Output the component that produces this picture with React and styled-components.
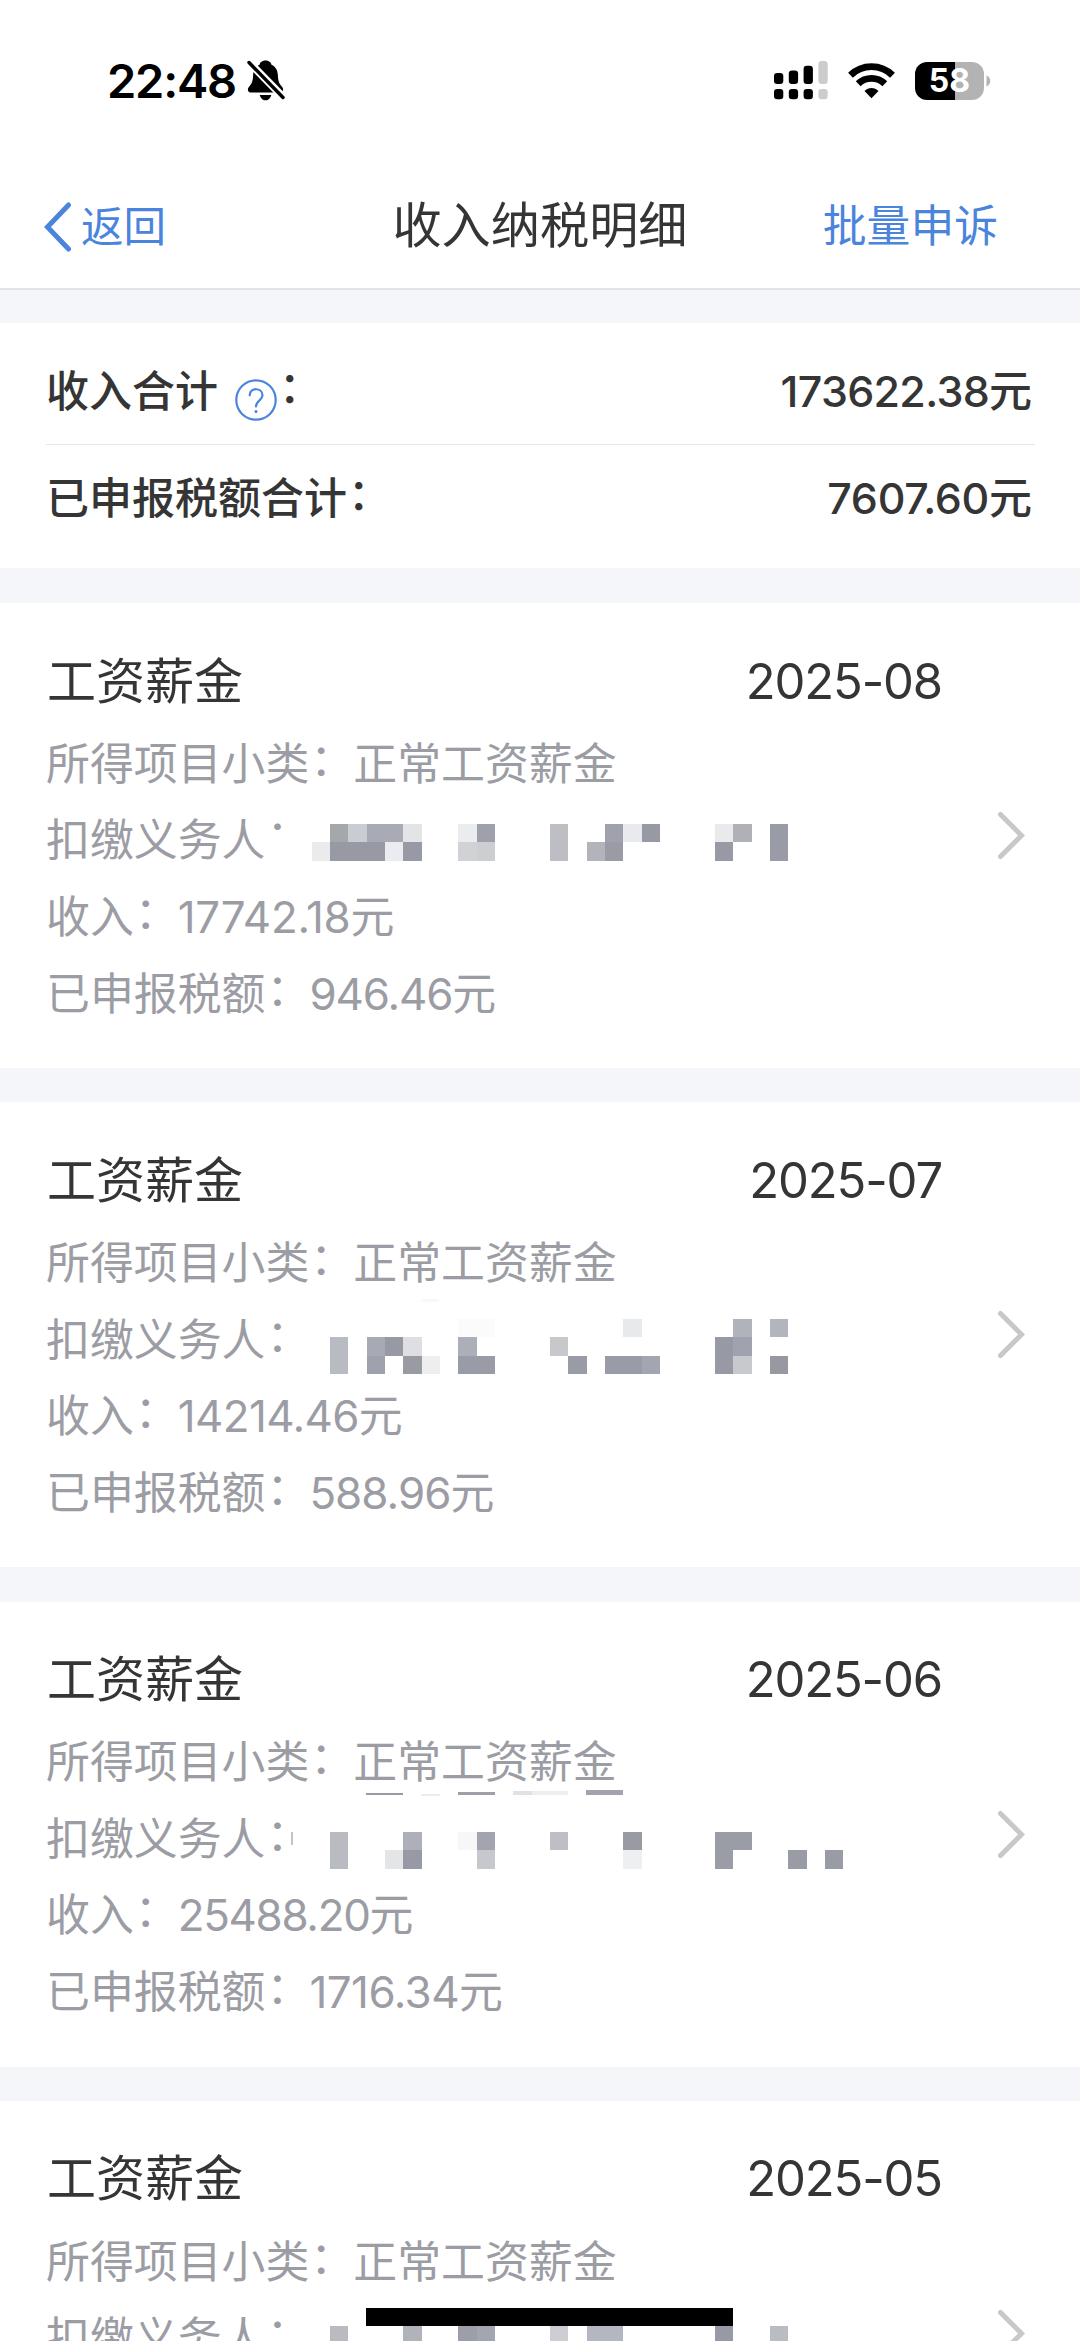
import React from 'react';
import styled, { createGlobalStyle } from 'styled-components';

const GlobalStyle = createGlobalStyle`
  html, body { margin: 0; padding: 0; background: #f4f6fa; }
  body {
    height: 2341px;
    overflow: hidden;
    font-family: Inter, "Noto Sans CJK SC", sans-serif;
    color: #353535;
  }
  * { box-sizing: border-box; }
`;

const Screen = styled.main`
  position: relative;
  width: 1080px;
  height: 2341px;
  overflow: hidden;
  background: #f4f6fa;
  display: flex;
  flex-direction: column;
`;

const StatusBar = styled.div`
  flex: none;
  height: 165px;
  padding: 50px 89px 0 107px;
  display: flex;
  align-items: flex-start;
  justify-content: space-between;
  background: #fff;
`;

const StatusGroup = styled.div`
  display: flex;
  align-items: center;
  height: 61px;
  gap: ${(p) => p.$gap}px;
`;

const Clock = styled.span`
  width: 130px;
  font-size: 47px;
  font-weight: 600;
  line-height: 61px;
  letter-spacing: -1.2px;
  color: #000;
  white-space: nowrap;
`;

const Battery = styled.div`
  display: flex;
  align-items: center;
  gap: 2px;
`;

const BatteryBody = styled.div`
  width: 69px;
  height: 38px;
  border-radius: 12px;
  background: linear-gradient(90deg, #000 58%, #b3b3b3 58%);
  color: #fff;
  font-size: 32px;
  font-weight: 700;
  line-height: 38px;
  text-align: center;
`;

const NavBar = styled.header`
  flex: none;
  height: 125px;
  padding: 0 82px 0 44px;
  display: grid;
  grid-template-columns: 1fr auto 1fr;
  align-items: center;
  background: #fff;
  border-bottom: 2px solid #e1e3e8;
`;

const NavTitle = styled.h1`
  margin: 0 0 4px 38px;
  font-size: 49.2px;
  font-weight: 400;
  line-height: 60px;
`;

const NavLink = styled.a`
  display: flex;
  align-items: center;
  justify-self: ${(p) => p.$side};
  gap: 9px;
  font-size: ${(p) => p.$size}px;
  line-height: 60px;
  color: #4a84dc;
`;

const Summary = styled.section`
  flex: none;
  height: 245px;
  margin-top: 33px;
  padding: 15px 45px 0 46px;
  background: #fff;
`;

const SummaryRow = styled.div`
  height: 106.5px;
  display: flex;
  align-items: center;
  justify-content: space-between;
  font-size: 43px;
  font-weight: 500;
  line-height: 60px;
  border-bottom: ${(p) => (p.$divided ? '1.5px solid #e6e7ea' : 'none')};
`;

const SummaryLabel = styled.div`
  display: flex;
  align-items: center;
  padding-top: 1px;
`;

const SummaryValue = styled.div`
  padding-right: 3px;
`;

const Amount = styled.span`
  letter-spacing: ${(p) => p.$track || 0}px;
`;

const HelpMark = styled.svg`
  margin: 17px 1px 0 17px;
`;

const Card = styled.article`
  flex: none;
  position: relative;
  height: 465px;
  margin-top: ${(p) => (p.$first ? 35 : 34.25)}px;
  padding: 32px 56px 0 46px;
  display: grid;
  grid-template-columns: 1fr 26px;
  align-items: start;
  background: #fff;
`;

const CardHead = styled.div`
  height: 90px;
  padding: 3px 56px 0 1px;
  display: flex;
  align-items: center;
  justify-content: space-between;
  font-size: 49px;
  line-height: 60px;
`;

const Period = styled.time`
  letter-spacing: -1.15px;
`;

const Line = styled.div`
  height: 76.6px;
  padding-top: 1px;
  display: flex;
  align-items: center;
  font-size: 43.9px;
  line-height: 60px;
  color: #9c9da4;
  white-space: nowrap;
`;

const Colon = styled.span`
  display: inline-block;
  transform: translate(1px, -4px);
  clip-path: ${(p) => (p.$cut ? 'inset(0 0 32px 0)' : 'none')};
`;

const Chevron = styled.svg`
  align-self: center;
  margin-top: -32px;
`;

const Redaction = styled.svg`
  position: absolute;
  left: 290px;
  top: 180px;
`;

const HomeIndicator = styled.div`
  position: absolute;
  left: 366px;
  top: 2308px;
  width: 367px;
  height: 18px;
  background: #000;
`;

const CELL = 18.33;

/* Redacted names: [column, row, colour] on a mosaic of square cells. */
const RECORDS = [
  {
    period: '2025-08', income: '17742.18', incomeTrack: -0.25, tax: '946.46', taxTrack: -1.1, cut: true, top: 221,
    cells: [
      [18, 0, '#a5a8aa'], [19, 0, '#c8ccd3'], [20, 0, '#a8abb5'], [21, 0, '#a8abb5'], [22, 0, '#e3e4e6'],
      [17, 1, '#ebebed'], [18, 1, '#9799a4'], [19, 1, '#9799a4'], [20, 1, '#9799a4'], [21, 1, '#ebecf0'], [22, 1, '#9799a4'],
      [25, 0, '#eaeced'], [26, 0, '#9ea1ac'], [25, 1, '#d1d2d5'], [26, 1, '#cdced1'],
      [30, 0, '#bdbfc3'], [30, 1, '#bcbdc5'], [32, 1, '#b2b3bb'], [33, 0, '#9fa2ad'], [33, 1, '#9b9ba6'],
      [34, 0, '#e8eaed'], [35, 0, '#9799a3'],
      [39, 0, '#e9eaeb'], [39, 1, '#9799a4'], [40, 0, '#afb1b7'], [42, 0, '#999ba6'], [42, 1, '#999ba6'],
    ],
  },
  {
    period: '2025-07', income: '14214.46', incomeTrack: -0.6, tax: '588.96', taxTrack: -0.95, top: 217,
    cells: [
      [18, 1, '#b9bbc2'], [18, 2, '#b9bbc2'], [20, 1, '#a7aab4'], [20, 2, '#9fa1ac'], [21, 1, '#9799a4'],
      [22, 1, '#dddfe3'], [22, 2, '#999ba2'], [23, 2, '#eeeeef'],
      [25, 0, '#fbfbfc'], [26, 0, '#fbfbfc'], [25, 1, '#acafb7'], [25, 2, '#999ba6'], [26, 2, '#999ba6'],
      [30, 1, '#c6c8cb'], [31, 2, '#999ba6'], [33, 2, '#999ba6'], [34, 2, '#999ba6'], [35, 2, '#a3a5b0'], [34, 0, '#e8e9ea'],
      [39, 1, '#979aa5'], [39, 2, '#979aa5'], [40, 0, '#b0b3b9'], [40, 1, '#a0a3af'], [40, 2, '#c7c9cf'],
      [42, 0, '#b3b5be'], [42, 2, '#9798a2'],
    ],
    strips: [[421, 197, 18, 3, '#f8f8f8']],
  },
  {
    period: '2025-06', income: '25488.20', incomeTrack: -1.3, tax: '1716.34', taxTrack: -0.5, top: 230,
    cells: [
      [18, 0, '#b9bbc0'], [18, 1, '#b9bbc2'], [21, 1, '#e4e5e6'], [22, 0, '#adb0b9'], [22, 1, '#9799a4'],
      [25, 0, '#f7f7f8'], [26, 0, '#a2a4af'], [26, 1, '#c6c8cd'], [30, 0, '#bebfc4'],
      [34, 0, '#999ba2'], [34, 1, '#eeeff1'],
      [39, 0, '#9a9ca6'], [39, 1, '#9a9ca6'], [40, 0, '#9a9ca6'], [43, 1, '#999ba5'], [45, 1, '#999ba5'],
    ],
    strips: [
      [366, 191, 37, 2, '#999ba2'], [421, 192, 19, 2, '#ececee'], [458, 190, 37, 3, '#9fa0a7'],
      [513, 189, 19, 4, '#e2e2e4'], [532, 189, 36, 4, '#eeeeef'], [586, 188, 37, 5, '#a2a3af'],
      [291, 230, 2, 13, '#c3c4c8'],
    ],
  },
  {
    period: '2025-05', income: '', tax: '', top: 225,
    cells: [
      [18, 0, '#b9bbc0'], [22, 0, '#b0b3ba'], [25, 0, '#9c9fa7'], [26, 0, '#a3a5b0'], [30, 0, '#cdced3'],
      [32, 0, '#b5b7c0'], [33, 0, '#b5b7c0'], [39, 0, '#9799a4'], [42, 0, '#babcc3'],
    ],
  },
];

function Mosaic({ cells, strips = [], top }) {
  return (
    <Redaction width="560" height="110" viewBox="290 180 560 110" shapeRendering="crispEdges">
      {cells.map(([c, r, fill]) => {
        const x = Math.round(c * CELL);
        const y = Math.round(top + r * CELL);
        return (
          <rect
            key={`${c}-${r}`}
            x={x}
            y={y}
            width={Math.round((c + 1) * CELL) - x}
            height={Math.round(top + (r + 1) * CELL) - y}
            fill={fill}
          />
        );
      })}
      {strips.map(([x, y, w, h, fill]) => (
        <rect key={`s${x}`} x={x} y={y} width={w} height={h} fill={fill} />
      ))}
    </Redaction>
  );
}

const BellSlash = () => (
  <svg width="38" height="41" viewBox="0 0 38 41">
    <path d="M18.5 0.5c3 0 5.6 1.8 6 4.3 4.300 1.900 6.200 5.700 6.400 10.700 0.200 6 1.600 8.600 4.300 11.400 1.500 1.600 1.400 5.600-1.800 5.600H3.600c-3.200 0-3.300-3.900-1.800-5.500 2.700-2.800 4.100-5.500 4.300-11.500 0.200-5 2.100-8.800 6.400-10.700 0.400-2.500 3-4.300 6-4.300z" fill="#000" />
    <path d="M12.700 35h11.600c-0.700 3-3 5.300-5.800 5.300S13.400 38 12.700 35z" fill="#000" />
    <path d="M-1 -1L38 39" stroke="#fff" strokeWidth="7.600" />
    <path d="M2 2.500L36 37.500" stroke="#000" strokeWidth="3.400" strokeLinecap="round" />
  </svg>
);

const Signal = () => (
  <svg width="54" height="39" viewBox="0 0 54 39">
    {[[0, 12], [14.800, 9.400], [29.600, 4.700], [44.400, 0]].map(([x, y], i) => (
      <g key={x} fill={i === 3 ? '#ccc' : '#000'}>
        <rect x={x} y={y} width="9.300" height={23 - y} rx="3.200" />
        <rect x={x} y="28" width="9.300" height="10.300" rx="3.200" />
      </g>
    ))}
  </svg>
);

const Wifi = () => (
  <svg width="47" height="36" viewBox="0 0 47 36">
    <g fill="none" stroke="#000" strokeWidth="6.800">
      <path d="M2.500 12.200a30 30 0 0 1 42 0" />
      <path d="M10.200 20.800a19 19 0 0 1 26.600 0" />
    </g>
    <path d="M23.500 35.300l-7-7.200c3.800-4.200 10.200-4.200 14 0z" fill="#000" />
  </svg>
);

function RecordCard({ record, first }) {
  return (
    <Card $first={first}>
      <div>
        <CardHead>
          <span>工资薪金</span>
          <Period>{record.period}</Period>
        </CardHead>
        <Line>所得项目小类<Colon>：</Colon>正常工资薪金</Line>
        <Line>扣缴义务人<Colon $cut={record.cut}>：</Colon></Line>
        {record.income && (
          <Line>收入<Colon>：</Colon><Amount $track={record.incomeTrack}>{record.income}</Amount>元</Line>
        )}
        {record.tax && (
          <Line>已申报税额<Colon>：</Colon><Amount $track={record.taxTrack}>{record.tax}</Amount>元</Line>
        )}
      </div>
      <Chevron width="27" height="465" viewBox="0 0 27 465">
        <path d="M2.500 211.500L23.500 232.500L2.500 253.500" fill="none" stroke="#c8c8c8" strokeWidth="5" strokeLinecap="round" />
      </Chevron>
      <Mosaic cells={record.cells} strips={record.strips} top={record.top} />
    </Card>
  );
}

export default function App() {
  return (
    <Screen>
      <GlobalStyle />
      <StatusBar>
        <StatusGroup $gap={10}>
          <Clock>22:48</Clock>
          <BellSlash />
        </StatusGroup>
        <StatusGroup $gap={20}>
          <Signal />
          <Wifi />
          <Battery>
            <BatteryBody>58</BatteryBody>
            <svg width="5" height="12" viewBox="0 0 5 12">
              <path d="M0.500 0.500C5.500 2.500 5.500 9.500 0.500 11.500z" fill="#b3b3b3" />
            </svg>
          </Battery>
        </StatusGroup>
      </StatusBar>
      <NavBar>
        <NavLink $side="start" $size={42.5}>
          <svg width="28" height="50" viewBox="0 0 28 50">
            <path d="M24.500 3L3.500 25L24.500 47" fill="none" stroke="#4a84dc" strokeWidth="5" strokeLinecap="round" />
          </svg>
          返回
        </NavLink>
        <NavTitle>收入纳税明细</NavTitle>
        <NavLink $side="end" $size={43.8}>批量申诉</NavLink>
      </NavBar>
      <Summary>
        <SummaryRow $divided>
          <SummaryLabel>
            收入合计
            <HelpMark width="42" height="42" viewBox="0 0 42 42">
              <circle cx="21" cy="21" r="19.700" fill="none" stroke="#4a84dc" strokeWidth="2.200" />
              <path d="M14.700 16.300c0-8.200 12.800-8 12.800 0 0 5-6.500 5.200-6.500 11.200" fill="none" stroke="#4a84dc" strokeWidth="2.200" strokeLinecap="round" />
              <circle cx="21" cy="32.500" r="1.500" fill="#4a84dc" />
            </HelpMark>
            <Colon>：</Colon>
          </SummaryLabel>
          <SummaryValue><Amount $track={-0.7}>173622.38</Amount>元</SummaryValue>
        </SummaryRow>
        <SummaryRow>
          <SummaryLabel>已申报税额合计<Colon>：</Colon></SummaryLabel>
          <SummaryValue><Amount $track={-0.3}>7607.60</Amount>元</SummaryValue>
        </SummaryRow>
      </Summary>
      {RECORDS.map((record, i) => (
        <RecordCard key={record.period} record={record} first={i === 0} />
      ))}
      <HomeIndicator />
    </Screen>
  );
}
